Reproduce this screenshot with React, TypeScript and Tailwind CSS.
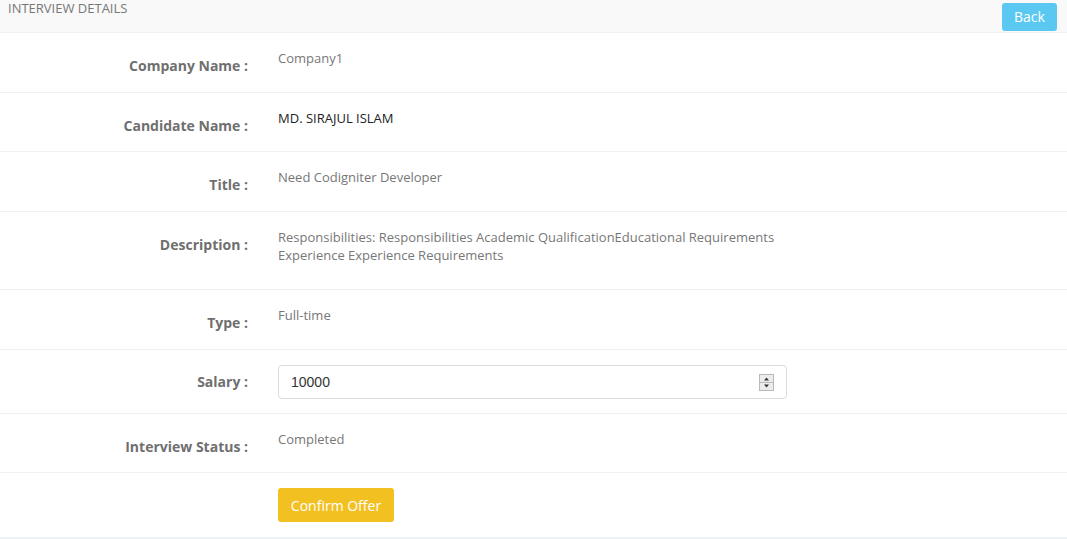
import React from 'react';

type Row = { label: string; value?: React.ReactNode; dark?: boolean; tight?: boolean };

function Spinner() {
  return (
    <svg width="15" height="17" viewBox="0 0 15 17" className="shrink-0">
      <rect x="0.5" y="0.5" width="14" height="16" fill="#ececec" stroke="#b9b9b9" />
      <line x1="1" y1="8.5" x2="14" y2="8.5" stroke="#b9b9b9" />
      <path d="M5 6.5 L7.5 3.5 L10 6.5 Z" fill="#333" />
      <path d="M5 10.5 L7.5 13.5 L10 10.5 Z" fill="#333" />
    </svg>
  );
}

function Label({ children }: { children?: React.ReactNode }) {
  return (
    <div className="w-[248px] shrink-0 pt-[7px] text-right text-[14px] font-bold leading-[20px] text-[#6f6f6f]">
      {children}
    </div>
  );
}

export default function App() {
  const rows: Row[] = [
    { label: 'Company Name :', value: 'Company1' },
    { label: 'Candidate Name :', value: 'MD. SIRAJUL ISLAM', dark: true, tight: true },
    { label: 'Title :', value: 'Need Codigniter Developer' },
    {
      label: 'Description :',
      value: (
        <>
          Responsibilities: Responsibilities Academic QualificationEducational Requirements
          <br />
          Experience Experience Requirements
        </>
      ),
    },
    { label: 'Type :', value: 'Full-time' },
  ];

  return (
    <div className="min-h-screen w-[1067px] bg-white font-['Open_Sans',sans-serif]">
      <div className="flex h-[33px] items-start justify-between border-b border-[#eef1f5] bg-[#f9f9f9] pl-2 pr-[10px]">
        <span className="text-[13px] leading-[17px] text-[#777]">INTERVIEW DETAILS</span>
        <button className="mt-[3px] h-[28px] w-[55px] rounded-[3px] bg-[#5bc8f2] pb-[2px] text-[14px] text-white">
          Back
        </button>
      </div>

      {rows.map((r) => (
        <div key={r.label} className="flex border-b border-[#eef1f5] pt-[16px]">
          <Label>{r.label}</Label>
          <div
            className={`ml-[30px] text-[13px] leading-[18px] ${r.tight ? 'pb-[24px]' : 'pb-[25px]'} ${
              r.dark ? 'text-[#222]' : 'text-[#777]'
            }`}
          >
            {r.value}
          </div>
        </div>
      ))}

      <div className="flex border-b border-[#eef1f5] pb-[14px] pt-[15px]">
        <Label>Salary :</Label>
        <div className="ml-[30px] flex h-[34px] w-[509px] items-center rounded-[4px] border border-[#dcdcdc] bg-white px-[12px]">
          <input
            type="text"
            defaultValue="10000"
            className="min-w-0 flex-1 bg-transparent font-['Liberation_Sans',Arial,sans-serif] text-[14px] text-[#333] outline-none"
          />
          <Spinner />
        </div>
      </div>

      <div className="flex border-b border-[#eef1f5] pt-[16px]">
        <Label>Interview Status :</Label>
        <div className="ml-[30px] pb-[24px] text-[13px] leading-[18px] text-[#777]">Completed</div>
      </div>

      <div className="flex border-b-2 border-[#eef1f5] pb-[15px] pt-[15px]">
        <div className="w-[248px] shrink-0" />
        <button className="ml-[30px] h-[34px] w-[116px] rounded-[3px] bg-[#f3c022] text-[14px] text-white">
          Confirm Offer
        </button>
      </div>
    </div>
  );
}
